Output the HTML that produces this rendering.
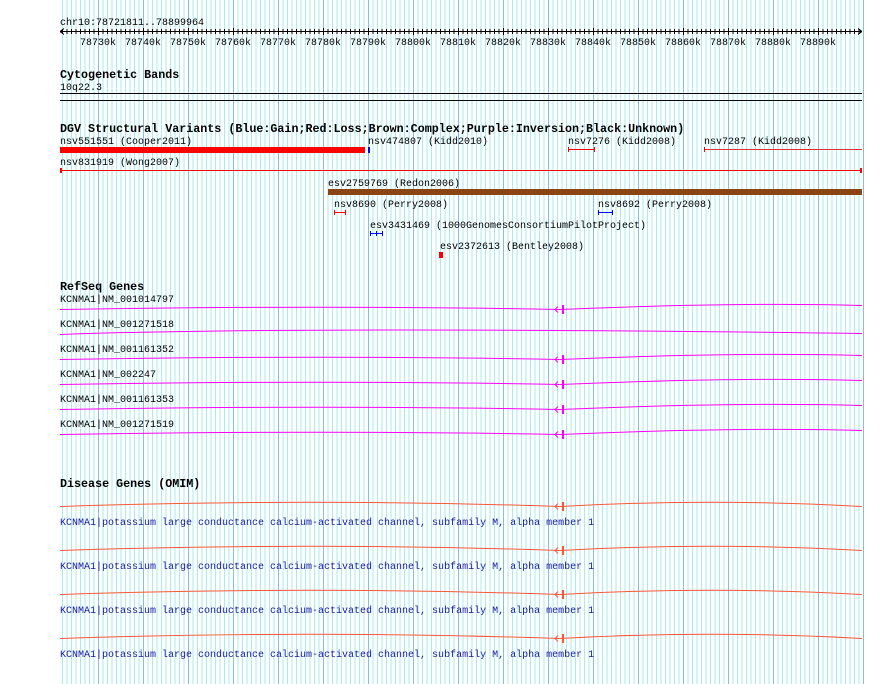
<!DOCTYPE html>
<html><head><meta charset="utf-8"><style>
html,body{margin:0;padding:0;background:#fff;}
#w{position:relative;width:890px;height:684px;overflow:hidden;
background:
repeating-linear-gradient(90deg,#7fc1ee 0,#7fc1ee 1px,transparent 1px,transparent 45px) 98px 0/800px 100% no-repeat,
repeating-linear-gradient(90deg,#a6eeee 0,#a6eeee 1px,transparent 1px,transparent 4.5px) 62px 0/801px 100% no-repeat,#fff;}
svg{position:absolute;left:0;top:0}
text{font-family:"Liberation Mono",monospace;font-size:10px;fill:#000}
.b{font-weight:bold;font-size:11.7px}
.d{fill:#1a1aa0}
</style></head><body><div id="w">
<svg width="890" height="684" viewBox="0 0 890 684">
<text x="60" y="25">chr10:78721811..78899964</text>
<g stroke="#000" stroke-width="1" shape-rendering="crispEdges">
<line x1="60" y1="31.5" x2="862" y2="31.5"/>
<path d="M60 31.5 l4 -3 M60 31.5 l4 3 M862 31.5 l-4 -3 M862 31.5 l-4 3"/>
<path id="ticks" d="" />
</g>
<g stroke="#000" shape-rendering="crispEdges">
<path d="M62.5 29v5M67 29v5M71.5 29v5M76 29v5M80.5 29v5M85 29v5M89.5 29v5M94 29v5M98.5 28v7M103 29v5M107.5 29v5M112 29v5M116.5 29v5M121 29v5M125.5 29v5M130 29v5M134.5 29v5M139 29v5M143.5 28v7M148 29v5M152.5 29v5M157 29v5M161.5 29v5M166 29v5M170.5 29v5M175 29v5M179.5 29v5M184 29v5M188.5 28v7M193 29v5M197.5 29v5M202 29v5M206.5 29v5M211 29v5M215.5 29v5M220 29v5M224.5 29v5M229 29v5M233.5 28v7M238 29v5M242.5 29v5M247 29v5M251.5 29v5M256 29v5M260.5 29v5M265 29v5M269.5 29v5M274 29v5M278.5 28v7M283 29v5M287.5 29v5M292 29v5M296.5 29v5M301 29v5M305.5 29v5M310 29v5M314.5 29v5M319 29v5M323.5 28v7M328 29v5M332.5 29v5M337 29v5M341.5 29v5M346 29v5M350.5 29v5M355 29v5M359.5 29v5M364 29v5M368.5 28v7M373 29v5M377.5 29v5M382 29v5M386.5 29v5M391 29v5M395.5 29v5M400 29v5M404.5 29v5M409 29v5M413.5 28v7M418 29v5M422.5 29v5M427 29v5M431.5 29v5M436 29v5M440.5 29v5M445 29v5M449.5 29v5M454 29v5M458.5 28v7M463 29v5M467.5 29v5M472 29v5M476.5 29v5M481 29v5M485.5 29v5M490 29v5M494.5 29v5M499 29v5M503.5 28v7M508 29v5M512.5 29v5M517 29v5M521.5 29v5M526 29v5M530.5 29v5M535 29v5M539.5 29v5M544 29v5M548.5 28v7M553 29v5M557.5 29v5M562 29v5M566.5 29v5M571 29v5M575.5 29v5M580 29v5M584.5 29v5M589 29v5M593.5 28v7M598 29v5M602.5 29v5M607 29v5M611.5 29v5M616 29v5M620.5 29v5M625 29v5M629.5 29v5M634 29v5M638.5 28v7M643 29v5M647.5 29v5M652 29v5M656.5 29v5M661 29v5M665.5 29v5M670 29v5M674.5 29v5M679 29v5M683.5 28v7M688 29v5M692.5 29v5M697 29v5M701.5 29v5M706 29v5M710.5 29v5M715 29v5M719.5 29v5M724 29v5M728.5 28v7M733 29v5M737.5 29v5M742 29v5M746.5 29v5M751 29v5M755.5 29v5M760 29v5M764.5 29v5M769 29v5M773.5 28v7M778 29v5M782.5 29v5M787 29v5M791.5 29v5M796 29v5M800.5 29v5M805 29v5M809.5 29v5M814 29v5M818.5 28v7M823 29v5M827.5 29v5M832 29v5M836.5 29v5M841 29v5M845.5 29v5M850 29v5M854.5 29v5M859 29v5"/>
</g>
<g text-anchor="middle">
<text x="98" y="45">78730k</text><text x="143" y="45">78740k</text><text x="188" y="45">78750k</text><text x="233" y="45">78760k</text><text x="278" y="45">78770k</text><text x="323" y="45">78780k</text><text x="368" y="45">78790k</text><text x="413" y="45">78800k</text><text x="458" y="45">78810k</text><text x="503" y="45">78820k</text><text x="548" y="45">78830k</text><text x="593" y="45">78840k</text><text x="638" y="45">78850k</text><text x="683" y="45">78860k</text><text x="728" y="45">78870k</text><text x="773" y="45">78880k</text><text x="818" y="45">78890k</text>
</g>
<text class="b" x="60" y="78">Cytogenetic Bands</text>
<text x="60" y="90">10q22.3</text>
<rect x="60" y="93" width="802" height="1" fill="#000"/>
<rect x="60" y="100" width="802" height="1" fill="#000"/>

<text class="b" x="60" y="132">DGV Structural Variants (Blue:Gain;Red:Loss;Brown:Complex;Purple:Inversion;Black:Unknown)</text>
<text x="60" y="144">nsv551551 (Cooper2011)</text>
<rect x="60" y="147" width="305" height="6" fill="#f00"/>
<text x="368" y="144">nsv474807 (Kidd2010)</text>
<rect x="368" y="147" width="2" height="6" fill="#00f"/>
<text x="568" y="144">nsv7276 (Kidd2008)</text>
<g shape-rendering="crispEdges">
<rect x="568" y="149" width="27" height="1" fill="#f00"/><rect x="568" y="147" width="1" height="5" fill="#f00"/><rect x="594" y="147" width="1" height="5" fill="#f00"/>
</g>
<text x="704" y="144">nsv7287 (Kidd2008)</text>
<rect x="704" y="149" width="158" height="1" fill="#e03030"/><rect x="704" y="147" width="1" height="5" fill="#f00"/>
<text x="60" y="165">nsv831919 (Wong2007)</text>
<rect x="60" y="170" width="802" height="1" fill="#f00"/><rect x="60" y="168" width="2" height="5" fill="#f00"/><rect x="860" y="168" width="2" height="5" fill="#f00"/>
<text x="328" y="186">esv2759769 (Redon2006)</text>
<rect x="328" y="189" width="534" height="6" fill="#8b4513"/>
<text x="334" y="207">nsv8690 (Perry2008)</text>
<rect x="334" y="212" width="12" height="1" fill="#f00"/><rect x="334" y="210" width="1" height="5" fill="#f00"/><rect x="345" y="210" width="1" height="5" fill="#f00"/>
<text x="598" y="207">nsv8692 (Perry2008)</text>
<rect x="598" y="212" width="15" height="1" fill="#00f"/><rect x="598" y="210" width="1" height="5" fill="#00f"/><rect x="612" y="210" width="1" height="5" fill="#00f"/>
<text x="370" y="228">esv3431469 (1000GenomesConsortiumPilotProject)</text>
<rect x="370" y="233" width="13" height="1" fill="#00f"/><rect x="370" y="231" width="1" height="5" fill="#00f"/><rect x="376" y="231" width="1" height="5" fill="#00f"/><rect x="382" y="231" width="1" height="5" fill="#00f"/>
<text x="440" y="249">esv2372613 (Bentley2008)</text>
<rect x="439" y="252" width="4" height="6" fill="#f00"/>

<text class="b" x="60" y="290">RefSeq Genes</text>
<text x="60" y="302">KCNMA1|NM_001014797</text>
<text x="60" y="327">KCNMA1|NM_001271518</text>
<text x="60" y="352">KCNMA1|NM_001161352</text>
<text x="60" y="377">KCNMA1|NM_002247</text>
<text x="60" y="402">KCNMA1|NM_001161353</text>
<text x="60" y="427">KCNMA1|NM_001271519</text>
<g fill="none" stroke="#f0f" stroke-width="1">
<path d="M60 309.5 Q330 305 560 309.5 Q740 302 862 305.5"/>
<path d="M60 334.5 Q300 326 862 333.5"/>
<path d="M60 359.5 Q330 355 560 359.5 Q740 352 862 355.5"/>
<path d="M60 384.5 Q330 380 560 384.5 Q740 377 862 380.5"/>
<path d="M60 409.5 Q330 405 560 409.5 Q740 402 862 405.5"/>
<path d="M60 434.5 Q330 430 560 434.5 Q740 427 862 430.5"/>
<path d="M558 306.5l-3 3 3 3M558 356.5l-3 3 3 3M558 381.5l-3 3 3 3M558 406.5l-3 3 3 3M558 431.5l-3 3 3 3"/>
</g>
<g fill="#f0f"><rect x="562" y="305" width="2" height="9"/><rect x="562" y="355" width="2" height="9"/><rect x="562" y="380" width="2" height="9"/><rect x="562" y="405" width="2" height="9"/><rect x="562" y="430" width="2" height="9"/></g>

<text class="b" x="60" y="487">Disease Genes (OMIM)</text>
<text class="d" x="60" y="525">KCNMA1|potassium large conductance calcium-activated channel, subfamily M, alpha member 1</text>
<text class="d" x="60" y="569">KCNMA1|potassium large conductance calcium-activated channel, subfamily M, alpha member 1</text>
<text class="d" x="60" y="613">KCNMA1|potassium large conductance calcium-activated channel, subfamily M, alpha member 1</text>
<text class="d" x="60" y="657">KCNMA1|potassium large conductance calcium-activated channel, subfamily M, alpha member 1</text>
<g fill="none" stroke="#ff5533" stroke-width="1">
<path d="M60 506.5 Q310 498 560 506.5 Q712 498 862 506.5"/>
<path d="M60 550.5 Q310 542 560 550.5 Q712 542 862 550.5"/>
<path d="M60 594.5 Q310 586 560 594.5 Q712 586 862 594.5"/>
<path d="M60 638.5 Q310 630 560 638.5 Q712 630 862 638.5"/>
<path d="M558 503.5l-3 3 3 3M558 547.5l-3 3 3 3M558 591.5l-3 3 3 3M558 635.5l-3 3 3 3"/>
</g>
<g fill="#ff5533"><rect x="562" y="502" width="2" height="9"/><rect x="562" y="546" width="2" height="9"/><rect x="562" y="590" width="2" height="9"/><rect x="562" y="634" width="2" height="9"/></g>
</svg>
</div></body></html>
